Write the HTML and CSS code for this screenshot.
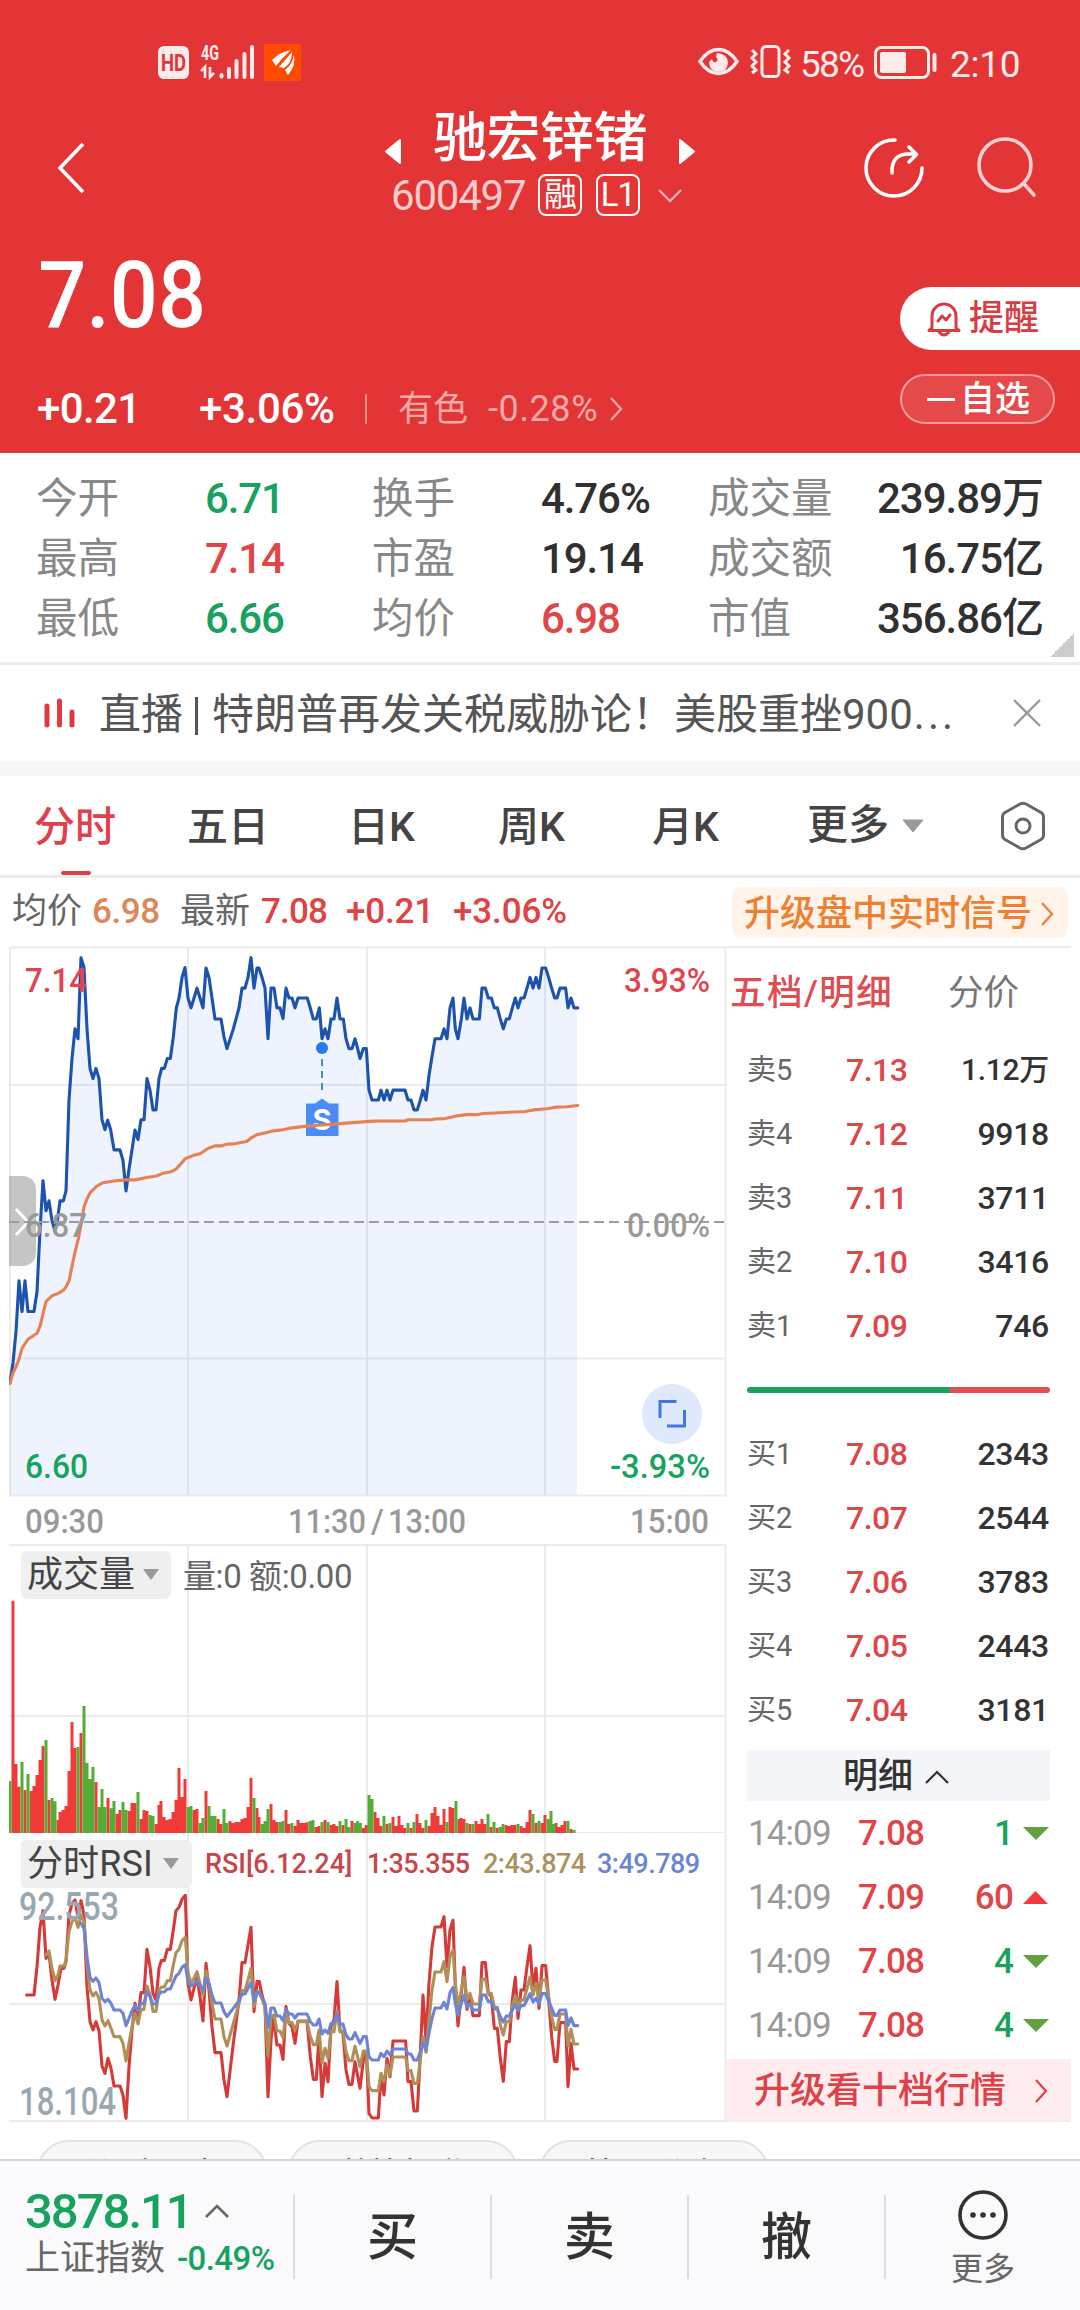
FILE: index.html
```html
<!DOCTYPE html>
<html lang="zh-CN">
<head>
<meta charset="utf-8">
<title>驰宏锌锗 600497</title>
<link rel="stylesheet" href="styles.css">
</head>
<body>
<header class="hero">
  <div class="status">
    <svg class="status-left" width="150" height="44" viewBox="155 40 150 44">
      <rect x="158" y="46" width="31" height="33" rx="6" fill="#fdeaea"/>
      <text x="161" y="71" class="st-hd" textLength="25" lengthAdjust="spacingAndGlyphs">HD</text>
      <text x="201" y="60" class="st-4g" textLength="18" lengthAdjust="spacingAndGlyphs">4G</text>
      <path d="M201 71l4-4v11M210 67v10l4-4" fill="none" stroke="#fdeaea" stroke-width="2.600"/>
      <path d="M221.500 75v1.500M229 69v8M236.500 61v16M244.500 54v23M252 47v30" stroke="#fdeaea" stroke-width="4" stroke-linecap="round"/>
      <rect x="264" y="44" width="37" height="37" fill="#ff4a00"/>
      <path d="M272 60Q280 52 291 50Q283 57 276 66ZM279 67Q286 59 292 52Q292 63 284 68ZM285 70Q292 65 294 55Q296 66 288 75Z" fill="#fff"/>
    </svg>
    <div class="status-right">
      <svg width="96" height="36" viewBox="696 44 96 36" fill="none" stroke="#fdeaea">
        <path d="M700 61.500Q708 49.500 718.500 49.500T737 61.500Q729 73.500 718.500 73.500T700 61.500Z" stroke-width="3.500"/>
        <path d="M717 53Q728 54 728 63Q727 72 718 72Q709 71 709 62L712 59Q713 63 716 62Q719 60 716 57Z" fill="#fdeaea" stroke="none"/>
        <rect x="762" y="46.500" width="17" height="30" rx="4" stroke-width="3"/>
        <path d="M752 50l4 4-4 4 4 4-4 4 4 4-4 3M789 50l-4 4 4 4-4 4 4 4-4 4 4 3" stroke-width="3"/>
      </svg>
      <span class="battery-text">58%</span>
      <svg width="64" height="36" viewBox="873 44 64 36">
        <rect x="875.500" y="47.500" width="53" height="30" rx="6" fill="none" stroke="#fdeaea" stroke-width="3"/>
        <rect x="880" y="52" width="26" height="21" rx="2" fill="#fdeaea"/>
        <path d="M934.500 55v15" stroke="#fdeaea" stroke-width="4" stroke-linecap="round"/>
      </svg>
      <span class="clock">2:10</span>
    </div>
  </div>

  <div class="nav">
    <svg class="back" width="30" height="52" viewBox="0 0 30 52" fill="none" stroke="#fff" stroke-width="3.600"><path d="M25 2L2 26l23 24"/></svg>
    <div class="title">
      <div class="title-row">
        <svg width="18" height="27" viewBox="0 0 18 27"><path d="M16 2V25L2 13.500Z" fill="#fff" stroke="#fff" stroke-width="2" stroke-linejoin="round"/></svg>
        <h1>驰宏锌锗</h1>
        <svg width="18" height="27" viewBox="0 0 18 27"><path d="M2 2V25L16 13.500Z" fill="#fff" stroke="#fff" stroke-width="2" stroke-linejoin="round"/></svg>
      </div>
      <div class="code-row">
        <span class="code">600497</span>
        <span class="badge">融</span>
        <span class="badge">L1</span>
        <svg width="24" height="14" viewBox="0 0 24 14" fill="none" stroke="#f4aeae" stroke-width="2.400"><path d="M1 1l11 11L23 1"/></svg>
      </div>
    </div>
    <svg class="share" width="60" height="60" viewBox="0 0 60 60" fill="none" stroke="#fff" stroke-width="3.600" stroke-linecap="round" stroke-linejoin="round">
      <path d="M31 2A28 28 0 1 0 58 30"/><path d="M28 35Q27 16 45 16H52M45 9l7.500 7.500-7.500 7.500"/>
    </svg>
    <svg class="search" width="62" height="62" viewBox="0 0 62 62" fill="none" stroke="#fbd0d0" stroke-width="3.600" stroke-linecap="round">
      <circle cx="29" cy="28" r="26"/><path d="M49 48l9 10"/>
    </svg>
  </div>

  <div class="quote">
    <div>
      <div class="price">7.08</div>
      <div class="change">
        <span class="chg">+0.21</span><span class="pct">+3.06%</span><i></i>
        <span class="sector">有色</span><span class="sector-pct">-0.28%</span>
        <svg width="14" height="26" viewBox="0 0 14 26" fill="none" stroke="#f4a6a6" stroke-width="2.400"><path d="M2 2l10 11L2 24"/></svg>
      </div>
    </div>
    <div class="actions">
      <button class="remind">
        <svg width="34" height="36" viewBox="0 0 34 36" fill="none" stroke="#d93c40" stroke-width="3" stroke-linejoin="round" stroke-linecap="round">
          <path d="M5 27V15A12 12 0 0 1 29 15V27L32 29.500H2Z"/><path d="M12 31Q17 37 22 31M11 20l4-5 4 4 4-5"/>
        </svg>提醒</button>
      <button class="watch"><i></i>自选</button>
    </div>
  </div>
</header>

<section class="stats">
  <span>今开</span><b class="down">6.71</b><span>换手</span><b>4.76%</b><span>成交量</span><b class="end">239.89万</b>
  <span>最高</span><b class="up">7.14</b><span>市盈</span><b>19.14</b><span>成交额</span><b class="end">16.75亿</b>
  <span>最低</span><b class="down">6.66</b><span>均价</span><b class="up">6.98</b><span>市值</span><b class="end">356.86亿</b>
</section>

<section class="news">
  <svg width="32" height="30" viewBox="0 0 32 30" stroke="#e03a40" stroke-width="5" stroke-linecap="round"><path d="M3 8v19M15.500 3v24M28 14v13"/></svg>
  <p>直播<i></i>特朗普再发关税威胁论！美股重挫900<span>...</span></p>
  <svg width="28" height="28" viewBox="0 0 28 28" stroke="#999" stroke-width="2.400"><path d="M1 1l26 26M27 1L1 27"/></svg>
</section>

<nav class="tabs">
  <a class="on">分时</a><a>五日</a><a>日K</a><a>周K</a><a>月K</a>
  <a class="more">更多<svg width="22" height="14" viewBox="0 0 22 14"><path d="M1 1H21L11 13Z" fill="#999" stroke="#999" stroke-linejoin="round"/></svg></a>
  <svg width="46" height="50" viewBox="0 0 46 50" fill="none" stroke="#666" stroke-width="3" stroke-linejoin="round"><path d="M20 3Q23 1.500 26 3L41 11.500Q43.500 13 43.500 16V34Q43.500 37 41 38.500L26 47Q23 48.500 20 47L5 38.500Q2.500 37 2.500 34V16Q2.500 13 5 11.500Z"/><circle cx="23" cy="25" r="7"/></svg>
</nav>

<section class="info">
  <span class="k">均价</span><span class="avg">6.98</span>
  <span class="k">最新</span><span class="v1">7.08</span><span class="v2">+0.21</span><span class="v3">+3.06%</span>
  <a class="signal">升级盘中实时信号<svg width="14" height="26" viewBox="0 0 14 26" fill="none" stroke="#f08040" stroke-width="2.400"><path d="M2 2l10 11L2 24"/></svg></a>
</section>

<main class="board">
  <div class="charts">
    <svg class="panel" width="718" height="598" viewBox="9 946 718 598">
      <g class="grid"><path d="M9 947.500H727M9 1085H726M9 1358.500H726M9 1495.500H727M10 947V1496M188 947V1496M367 947V1496M545 947V1496M725.500 947V1496"/></g>
      <g transform="translate(0 930) scale(.333333 .395400)">
        <path class="area" d="M30 1428L30,1145 39,1095 48,1015 57,887 66,965 75,887 84,965 102,965 111,915 120,760 129,634 138,710 147,685 156,735 165,762 172,735 180,685 190,685 198,660 207,430 216,325 225,250 234,275 243,70 252,95 261,250 270,350 279,376 288,350 297,376 306,480 315,505 323,481 332,505 342,556 360,556 369,583 378,660 387,605 396,556 405,506 414,530 423,480 432,480 441,376 450,405 459,455 468,455 477,376 485,350 493,350 502,325 511,325 520,270 529,197 537,172 546,120 555,95 564,172 573,197 582,172 591,147 600,172 609,197 618,96 627,120 636,172 645,225 663,225 672,270 681,300 700,250 717,197 726,147 735,147 744,120 753,70 762,147 771,96 777,96 786,120 795,147 804,275 813,147 822,147 831,197 840,197 849,224 858,147 867,172 876,172 885,197 894,172 922,172 931,198 940,225 949,225 958,197 966,275 975,250 984,275 993,225 1002,225 1011,172 1020,225 1030,225 1038,275 1047,300 1056,300 1065,275 1073,300 1080,325 1090,300 1099,300 1107,405 1116,430 1135,430 1143,405 1152,430 1161,405 1170,430 1179,405 1215,405 1224,430 1233,430 1242,455 1252,455 1261,430 1269,405 1278,430 1287,368 1296,320 1305,275 1323,275 1332,250 1341,275 1350,197 1359,172 1366,250 1374,275 1384,225 1392,172 1401,225 1410,197 1419,225 1438,225 1446,147 1456,147 1465,172 1474,172 1483,197 1492,197 1501,225 1510,250 1519,225 1528,225 1537,197 1546,172 1554,197 1563,172 1572,172 1581,147 1590,120 1599,147 1608,120 1617,147 1626,96 1637,96 1646,120 1655,147 1664,172 1671,172 1680,147 1697,147 1704,197 1713,172 1722,197 1731,197V1428Z"/>
        <polyline class="line price-line" points="30,1145 39,1095 48,1015 57,887 66,965 75,887 84,965 102,965 111,915 120,760 129,634 138,710 147,685 156,735 165,762 172,735 180,685 190,685 198,660 207,430 216,325 225,250 234,275 243,70 252,95 261,250 270,350 279,376 288,350 297,376 306,480 315,505 323,481 332,505 342,556 360,556 369,583 378,660 387,605 396,556 405,506 414,530 423,480 432,480 441,376 450,405 459,455 468,455 477,376 485,350 493,350 502,325 511,325 520,270 529,197 537,172 546,120 555,95 564,172 573,197 582,172 591,147 600,172 609,197 618,96 627,120 636,172 645,225 663,225 672,270 681,300 700,250 717,197 726,147 735,147 744,120 753,70 762,147 771,96 777,96 786,120 795,147 804,275 813,147 822,147 831,197 840,197 849,224 858,147 867,172 876,172 885,197 894,172 922,172 931,198 940,225 949,225 958,197 966,275 975,250 984,275 993,225 1002,225 1011,172 1020,225 1030,225 1038,275 1047,300 1056,300 1065,275 1073,300 1080,325 1090,300 1099,300 1107,405 1116,430 1135,430 1143,405 1152,430 1161,405 1170,430 1179,405 1215,405 1224,430 1233,430 1242,455 1252,455 1261,430 1269,405 1278,430 1287,368 1296,320 1305,275 1323,275 1332,250 1341,275 1350,197 1359,172 1366,250 1374,275 1384,225 1392,172 1401,225 1410,197 1419,225 1438,225 1446,147 1456,147 1465,172 1474,172 1483,197 1492,197 1501,225 1510,250 1519,225 1528,225 1537,197 1546,172 1554,197 1563,172 1572,172 1581,147 1590,120 1599,147 1608,120 1617,147 1626,96 1637,96 1646,120 1655,147 1664,172 1671,172 1680,147 1697,147 1704,197 1713,172 1722,197 1733,197"/>
      </g>
      <circle cx="322" cy="1048" r="6" fill="#2878f0"/>
      <path d="M322 1059v35" stroke="#4c88c8" stroke-width="2" stroke-dasharray="7 5"/>
      <path d="M306 1103.500H315L322 1098.500L329 1103.500H338.500V1136H306Z" fill="#4c8cf8"/>
      <text x="322" y="1130" class="mark" text-anchor="middle">S</text>
      <polyline class="line avg-line" transform="translate(0 930) scale(.333333 .395400)" points="30,1147 39,1120 48,1105 57,1085 66,1058 84,1035 111,1020 121,1000 129,970 138,940 156,925 175,919 190,911 198,903 208,885 216,850 225,815 234,785 243,745 252,700 261,680 270,665 290,648 306,640 340,635 378,632 405,632 440,626 470,622 490,615 510,612 520,609 530,603 540,594 555,579 580,570 600,566 625,552 645,546 663,546 680,542 700,541 740,535 755,525 770,518 800,512 820,508 850,505 870,501 920,496 966,493 1030,489 1110,484 1135,483 1215,483 1225,480 1295,480 1305,478 1335,477 1350,474 1370,470 1400,467 1430,467 1450,464 1500,462 1575,459 1600,455 1640,452 1670,448 1700,447 1733,444"/>
      <path d="M9 1176H24Q36 1178 36 1190V1252Q36 1264 24 1266H9Z" fill="#8c8c8c" fill-opacity=".5"/>
      <path d="M16 1209L28 1222L16 1235" fill="none" stroke="#fff" stroke-width="3"/>
      <path d="M9 1222H724" stroke="#999ca6" stroke-width="2" stroke-dasharray="10 5"/>
      <g class="axis">
        <text class="t-up" x="25" y="992" textLength="62" lengthAdjust="spacingAndGlyphs">7.14</text>
        <text x="25" y="1237" textLength="62" lengthAdjust="spacingAndGlyphs">6.87</text>
        <text class="t-down" x="25" y="1478" textLength="63" lengthAdjust="spacingAndGlyphs">6.60</text>
        <text class="t-up" x="624" y="992" textLength="86" lengthAdjust="spacingAndGlyphs">3.93%</text>
        <text x="627" y="1237" textLength="83" lengthAdjust="spacingAndGlyphs">0.00%</text>
        <text class="t-down" x="610" y="1478" textLength="100" lengthAdjust="spacingAndGlyphs">-3.93%</text>
        <text x="25" y="1533" textLength="79" lengthAdjust="spacingAndGlyphs">09:30</text>
        <text x="288" y="1533" textLength="78" lengthAdjust="spacingAndGlyphs">11:30</text>
        <text x="371" y="1533">/</text>
        <text x="388" y="1533" textLength="78" lengthAdjust="spacingAndGlyphs">13:00</text>
        <text x="630" y="1533" textLength="79" lengthAdjust="spacingAndGlyphs">15:00</text>
      </g>
      <circle cx="672" cy="1414" r="30" fill="#dfe8fd"/>
      <path d="M660 1418V1401.500H676.500M684.500 1410V1426H667" fill="none" stroke="#3f78e0" stroke-width="3"/>
    </svg>

    <div class="sub">
      <svg class="panel" width="718" height="289" viewBox="9 1544 718 289">
        <g class="grid"><path d="M9 1545H726M9 1716H726M9 1833H726M188 1545V1833M367 1545V1833M545 1545V1833M725.500 1545V1833"/></g>
        <g transform="translate(0 1530) scale(.333333)" stroke-width="9">
          <path stroke="#f13b38" d="M39 912V212M48 912V702M57 912V770M75 912V780M93 912V783M102 912V768M111 912V735M120 912V690M129 912V648M147 912V810M174 912V870M180 912V846M189 912V840M198 912V828M207 912V723M216 912V576M225 912V654M243 912V609M288 912V756M324 912V804M351 912V852M360 912V840M387 912V843M396 912V819M405 912V819M423 912V867M432 912V840M441 912V843M468 912V882M477 912V825M483 912V813M492 912V861M501 912V870M510 912V867M519 912V846M528 912V810M537 912V714M546 912V801M555 912V747M582 912V840M591 912V837M618 912V783M654 912V867M663 912V882M690 912V873M699 912V879M708 912V876M717 912V876M726 912V867M735 912V864M744 912V831M753 912V744M771 912V834M777 912V861M813 912V822M822 912V870M831 912V876M858 912V840M867 912V882M885 912V888M894 912V870M903 912V879M912 912V879M921 912V877M948 912V891M957 912V888M975 912V870M993 912V885M1002 912V882M1011 912V888M1029 912V885M1056 912V873M1090 912V894M1099 912V885M1125 912V846M1134 912V864M1143 912V888M1161 912V882M1179 912V861M1188 912V888M1197 912V858M1206 912V885M1215 912V894M1233 912V894M1251 912V852M1260 912V879M1269 912V894M1287 912V888M1296 912V849M1305 912V831M1314 912V858M1323 912V885M1332 912V837M1350 912V831M1359 912V834M1377 912V867M1383 912V864M1392 912V867M1410 912V882M1428 912V873M1437 912V882M1446 912V867M1455 912V882M1473 912V891M1491 912V894M1518 912V885M1527 912V888M1536 912V885M1545 912V885M1563 912V888M1572 912V894M1581 912V876M1590 912V840M1608 912V879M1626 912V879M1635 912V855M1668 912V879M1677 912V891M1686 912V885M1695 912V873M1713 912V897"/>
          <path stroke="#55ad35" d="M30 912V753M66 912V696M84 912V732M138 912V630M156 912V804M165 912V814M234 912V651M252 912V528M261 912V699M270 912V747M279 912V711M297 912V831M306 912V777M315 912V831M333 912V835M342 912V813M369 912V816M378 912V840M414 912V786M450 912V855M459 912V858M564 912V831M573 912V828M600 912V879M609 912V864M627 912V828M636 912V858M645 912V858M672 912V837M681 912V879M762 912V804M786 912V882M795 912V873M804 912V837M840 912V876M849 912V873M876 912V879M930 912V873M939 912V870M966 912V876M984 912V876M1020 912V873M1038 912V867M1047 912V891M1065 912V879M1073 912V873M1081 912V879M1107 912V795M1116 912V807M1152 912V858M1170 912V879M1224 912V879M1242 912V876M1278 912V870M1341 912V876M1368 912V813M1401 912V879M1419 912V882M1464 912V852M1482 912V876M1500 912V891M1509 912V882M1554 912V882M1599 912V852M1617 912V873M1644 912V867M1653 912V843M1662 912V882M1704 912V873M1722 912V900"/>
        </g>
      </svg>
      <div class="overlay">
        <button class="pick">成交量<svg width="16" height="12" viewBox="0 0 16 12"><path d="M0 0H16L8 11Z" fill="#999"/></svg></button>
        <span class="vol">量:0 额:0.00</span>
      </div>
    </div>

    <div class="sub">
      <svg class="panel" width="718" height="289" viewBox="9 1833 718 289">
        <g class="grid"><path d="M9 2004H726M9 2121H727M188 1833V2121M367 1833V2121M545 1833V2121M725.500 1833V2121"/></g>
        <g transform="translate(0 1840) scale(.333333)">
          <polyline class="line" stroke="#d63a38" points="80,465 102,465 111,380 120,262 129,212 138,355 147,340 156,420 165,478 174,435 183,385 192,385 198,365 207,225 216,190 225,180 234,232 243,182 252,225 261,440 270,545 279,570 288,545 297,572 306,678 315,700 324,655 333,685 342,738 360,738 369,765 378,835 387,680 396,570 405,490 414,530 423,458 432,458 441,328 450,380 459,460 468,480 477,385 484,362 493,362 502,328 511,328 520,270 528,212 537,202 546,178 556,166 564,430 573,480 582,445 591,410 600,470 609,543 618,370 627,450 636,560 645,638 663,638 672,720 681,770 700,610 717,480 726,368 735,368 744,315 753,262 762,515 771,425 778,425 786,465 795,500 804,770 813,600 820,530 831,615 840,615 849,658 858,500 867,550 876,560 885,610 894,543 921,543 931,650 940,718 949,718 957,590 966,770 975,670 984,725 993,560 1002,540 1011,425 1020,570 1029,580 1038,690 1047,733 1056,733 1065,665 1080,745 1090,660 1099,635 1107,820 1116,834 1135,834 1143,705 1152,765 1161,655 1170,710 1179,603 1217,603 1224,725 1233,725 1242,813 1252,813 1261,640 1269,465 1278,600 1287,430 1296,320 1305,261 1323,261 1332,230 1341,380 1350,270 1359,241 1366,440 1374,558 1384,460 1392,382 1401,508 1410,470 1419,527 1438,527 1446,368 1456,368 1465,460 1474,470 1483,565 1492,565 1501,655 1510,724 1519,605 1528,605 1537,480 1546,412 1554,535 1563,450 1572,450 1581,380 1590,317 1599,450 1608,385 1617,505 1626,377 1637,377 1646,480 1655,590 1664,664 1671,664 1680,548 1697,548 1704,740 1713,610 1722,687 1733,687"/>
          <polyline class="line" stroke="#b09058" points="138,345 147,333 156,385 165,422 174,405 180,378 192,378 198,362 207,275 216,245 225,232 234,262 243,225 252,245 261,370 270,450 279,468 288,457 297,475 306,540 315,558 324,542 333,565 342,590 360,590 369,610 378,663 387,610 396,560 405,520 414,552 423,508 432,508 441,438 450,465 459,514 468,514 477,450 484,441 493,441 502,422 511,422 520,375 528,338 537,328 546,302 556,292 564,400 573,428 582,415 591,395 600,430 609,465 618,393 627,430 636,490 645,537 663,537 672,590 681,618 700,550 717,490 726,452 735,452 744,420 753,385 762,500 771,455 778,455 795,500 804,648 813,530 822,525 831,573 840,573 849,593 858,515 867,548 876,548 885,570 894,545 921,545 931,590 940,614 949,614 957,570 966,668 975,625 984,655 993,575 1002,575 1011,512 1020,575 1029,575 1038,635 1047,662 1056,662 1065,618 1080,680 1090,633 1099,633 1107,740 1116,752 1135,752 1143,700 1152,725 1161,675 1170,705 1179,651 1217,651 1224,692 1233,692 1242,730 1252,730 1261,660 1269,590 1278,637 1287,540 1296,450 1305,396 1323,396 1332,365 1341,425 1350,350 1359,330 1366,430 1374,500 1384,450 1392,410 1401,480 1410,460 1419,492 1438,492 1446,417 1456,417 1465,460 1474,460 1483,502 1492,502 1501,555 1510,585 1519,545 1528,545 1537,500 1546,467 1554,500 1563,480 1572,480 1581,445 1590,411 1599,465 1608,430 1617,475 1626,420 1637,420 1646,470 1655,530 1664,568 1671,568 1680,522 1697,522 1704,618 1713,568 1722,612 1733,612"/>
          <polyline class="line" stroke="#6c84d2" points="243,250 252,265 261,350 270,412 279,424 288,414 297,428 306,475 315,485 324,478 333,490 342,510 360,510 369,520 378,557 387,535 396,512 405,496 414,512 423,490 432,490 441,455 450,470 459,492 468,492 477,462 484,456 493,456 502,447 511,447 528,408 537,400 546,382 556,374 564,425 573,438 582,432 591,422 600,438 609,452 618,414 627,432 636,465 645,489 663,489 672,515 681,530 700,505 717,482 726,462 735,462 744,445 753,428 762,482 771,458 778,458 795,490 804,562 813,504 822,504 831,528 840,528 849,542 858,508 867,522 876,522 885,534 894,522 921,522 931,545 940,555 949,555 957,537 966,582 975,570 984,580 993,550 1002,550 1011,521 1020,552 1029,552 1038,585 1047,597 1056,597 1065,578 1080,610 1090,590 1099,590 1107,650 1116,660 1135,660 1143,640 1152,650 1161,633 1170,645 1179,627 1217,627 1224,642 1233,642 1242,660 1252,660 1261,635 1269,608 1278,630 1287,580 1296,535 1305,504 1323,504 1332,487 1341,507 1350,458 1359,443 1366,490 1374,526 1384,490 1392,467 1401,502 1410,492 1419,510 1438,510 1446,465 1456,465 1465,485 1474,485 1483,507 1492,507 1501,530 1510,546 1519,528 1528,528 1546,493 1554,512 1563,497 1572,497 1581,480 1590,461 1599,486 1608,475 1617,492 1626,461 1637,461 1655,505 1664,526 1671,526 1680,510 1697,510 1704,556 1713,534 1722,557 1733,557"/>
        </g>
        <text class="range" x="19" y="1920" textLength="100" lengthAdjust="spacingAndGlyphs">92.553</text>
        <text class="range" x="19" y="2115" textLength="97" lengthAdjust="spacingAndGlyphs">18.104</text>
      </svg>
      <div class="overlay">
        <button class="pick rsi">分时RSI<svg width="16" height="12" viewBox="0 0 16 12"><path d="M0 0H16L8 11Z" fill="#999"/></svg></button>
        <span class="legend l0">RSI[6.12.24]</span><span class="legend l1">1:35.355</span><span class="legend l2">2:43.874</span><span class="legend l3">3:49.789</span>
      </div>
    </div>
  </div>

  <aside class="book">
    <div class="book-tabs"><span class="on">五档/明细</span><span>分价</span></div>
    <div class="lvl"><span>卖5</span><b>7.13</b><em class="wan">1.12万</em></div>
    <div class="lvl"><span>卖4</span><b>7.12</b><em>9918</em></div>
    <div class="lvl"><span>卖3</span><b>7.11</b><em>3711</em></div>
    <div class="lvl"><span>卖2</span><b>7.10</b><em>3416</em></div>
    <div class="lvl"><span>卖1</span><b>7.09</b><em>746</em></div>
    <div class="ratio"><i></i><i></i></div>
    <div class="lvl"><span>买1</span><b>7.08</b><em>2343</em></div>
    <div class="lvl"><span>买2</span><b>7.07</b><em>2544</em></div>
    <div class="lvl"><span>买3</span><b>7.06</b><em>3783</em></div>
    <div class="lvl"><span>买4</span><b>7.05</b><em>2443</em></div>
    <div class="lvl"><span>买5</span><b>7.04</b><em>3181</em></div>
    <div class="detail">明细<svg width="24" height="14" viewBox="0 0 24 14" fill="none" stroke="#333" stroke-width="2.200"><path d="M1 13L12 2l11 11"/></svg></div>
    <div class="tick"><span>14:09</span><b>7.08</b><em class="down">1</em><svg width="26" height="13" viewBox="0 0 26 13"><path d="M0 0H26L13 13Z" fill="#64a03c"/></svg></div>
    <div class="tick"><span>14:09</span><b>7.09</b><em class="up">60</em><svg width="26" height="13" viewBox="0 0 26 13"><path d="M0 13H25L12.500 0Z" fill="#f83838"/></svg></div>
    <div class="tick"><span>14:09</span><b>7.08</b><em class="down">4</em><svg width="26" height="13" viewBox="0 0 26 13"><path d="M0 0H26L13 13Z" fill="#64a03c"/></svg></div>
    <div class="tick"><span>14:09</span><b>7.08</b><em class="down">4</em><svg width="26" height="13" viewBox="0 0 26 13"><path d="M0 0H26L13 13Z" fill="#64a03c"/></svg></div>
    <a class="upgrade">升级看十档行情<svg width="14" height="26" viewBox="0 0 14 26" fill="none" stroke="#e04048" stroke-width="2.200"><path d="M2 2l10 11L2 24"/></svg></a>
  </aside>
</main>

<div class="chips"><span>分时周内</span><span>逆势操作</span><span>筹码分布</span></div>

<footer class="bar">
  <div class="index">
    <div class="idx-top"><b>3878.11</b><svg width="24" height="14" viewBox="0 0 24 14" fill="none" stroke="#666" stroke-width="2.600"><path d="M1 13L12 2l11 11"/></svg></div>
    <div class="idx-sub"><span>上证指数</span><b>-0.49%</b></div>
  </div>
  <a>买</a><a>卖</a><a>撤</a>
  <div class="etc">
    <svg width="52" height="52" viewBox="0 0 52 52"><circle cx="26" cy="26" r="23" fill="none" stroke="#333" stroke-width="3.600"/><g fill="#333"><circle cx="16" cy="26" r="2.800"/><circle cx="26" cy="26" r="2.800"/><circle cx="36" cy="26" r="2.800"/></g></svg>
    <span>更多</span>
  </div>
</footer>
</body>
</html>
```
FILE: styles.css
```css
* { box-sizing: border-box; margin: 0; padding: 0; }
html, body { width: 1080px; height: 2310px; overflow: hidden; }
body {
  font-family: Roboto, "Noto Sans CJK SC", sans-serif;
  background: #fff; color: #333;
  display: flex; flex-direction: column;
  line-height: 1;
}
b, em, i { font-style: normal; font-weight: 500; }
button { border: 0; background: none; font: inherit; color: inherit; }
svg { display: block; flex: none; }
span, a, b { white-space: nowrap; }
.up { color: #e14545 !important; }
.down { color: #17a35e !important; }

/* header */
.hero { height: 453px; flex: none; background: #e33536; color: #fff; display: flex; flex-direction: column; }
.status { height: 100px; padding: 40px 61px 0 155px; display: flex; justify-content: space-between; }
.st-hd { font-size: 24px; font-weight: 700; fill: #e33536; }
.st-4g { font-size: 20px; font-weight: 700; fill: #fdeaea; }
.status-right { display: flex; align-items: center; height: 44px; color: #fdeaea; font-size: 37px; }
.battery-text { margin: 5px 7px 0 8px; width: 66px; letter-spacing: -1.8px; }
.clock { margin: 5px 0 0 13px; width: 69px; letter-spacing: -.3px; }

.nav { height: 140px; display: grid; grid-template-columns: 27px 779px 112px 60px; align-items: start; padding: 0 44px 0 58px; }
.back { margin-top: 42px; }
.title { margin-left: 299px; width: 312px; }
.title-row { display: flex; height: 70px; justify-content: space-between; }
.title-row svg { margin-top: 38px; }
.title h1 { font-size: 54px; font-weight: 500; line-height: 78px; letter-spacing: -.5px; }
.code-row { display: flex; align-items: center; height: 50px; padding-left: 7px; }
.code { font-size: 42px; letter-spacing: -1.2px; width: 147px; color: #f8cccc; padding-top: 2px; }
.badge { width: 44px; height: 42px; border: 2.500px solid #fff; border-radius: 8px; font-size: 33px; line-height: 37px; text-align: center; margin-right: 14px; letter-spacing: -1px; }
.code-row svg { margin-left: 4px; margin-top: 2px; }
.share { margin-top: 38px; }
.search { margin-top: 37px; }

.quote { flex: 1; display: flex; justify-content: space-between; }
.price { font-size: 93px; font-weight: 500; line-height: 111px; height: 109px; padding-left: 42px; transform: scaleX(.91); transform-origin: 0 0; }
.change { display: flex; align-items: center; height: 50px; margin-top: 34px; padding: 2px 0 0 37px; font-size: 42px; font-weight: 500; }
.chg { width: 162px; letter-spacing: -.6px; }
.pct { width: 166px; letter-spacing: -.3px; }
.change i { width: 2px; height: 30px; background: #f08c8c; margin-right: 31px; }
.sector { width: 90px; font-size: 35px; font-weight: 400; color: #f6a9a9; }
.sector-pct { width: 121px; font-size: 36px; font-weight: 400; color: #f6a9a9; letter-spacing: .6px; }
.actions { width: 180px; padding-top: 47px; }
.remind { width: 180px; height: 63px; background: #fff; color: #d93c40; border-radius: 32px 0 0 32px; display: flex; align-items: center; gap: 8px; padding-left: 27px; font-size: 35px; font-weight: 500; }
.watch { width: 155px; height: 50px; margin-top: 24px; border: 2px solid #f19a9a; border-radius: 25px; background: rgba(255,255,255,.1); color: #fff; display: flex; align-items: center; font-size: 35px; font-weight: 500; padding-left: 25px; }
.watch i { width: 28px; height: 3px; background: #fff; margin-right: 5px; }

/* key figures */
.stats {
  height: 212px; flex: none; border-bottom: 3px solid #ececec; padding: 16px 37px 0 36px;
  display: grid; grid-template-columns: 168px 168px 168px 168px 130px 1fr; grid-auto-rows: 60px; align-items: center;
  font-size: 41.5px;
  background: linear-gradient(135deg, transparent 50%, #ccc 50%) 1050px 180px / 24px 24px no-repeat;
}
.stats span { color: #888; }
.stats b { font-weight: 500; font-size: 42px; letter-spacing: -1.1px; color: #303030; padding-left: 1px; }
.stats .end { text-align: right; letter-spacing: -1px; padding: 0; }

.news { height: 96px; flex: none; display: flex; align-items: center; padding-left: 44px; }
.news p { width: 937px; padding: 3px 0 0 23px; font-size: 42px; line-height: 60px; color: #555; white-space: nowrap; }
.news p i { display: inline-block; width: 3px; height: 38px; background: #555; margin: 0 14px 0 12px; vertical-align: -6px; }
.news p span { letter-spacing: 3px; margin-left: 1px; }

.tabs { height: 117px; flex: none; border-top: 15px solid #f7f7f7; border-bottom: 3px solid #ebebeb; display: grid; grid-template-columns: 153px 161px 150px 154px 155px 193px 46px; align-items: center; padding-left: 34px; font-size: 41px; font-weight: 500; color: #444; }
.tabs a { height: 99px; line-height: 103px; position: relative; }
.tabs .on { color: #e0404a; }
.tabs .on::after { content: ""; position: absolute; left: 27px; bottom: 0; width: 30px; height: 4px; border-radius: 2px; background: #d8404c; }
.tabs .more { display: flex; align-items: center; gap: 13px; }

.info { height: 68px; flex: none; display: flex; align-items: center; padding: 0 12px 2px 12px; font-size: 35px; color: #e04343; }
.info span { letter-spacing: -.4px; font-weight: 500; }
.info .k { color: #666; width: 80px; letter-spacing: 0; font-weight: 400; }
.info .avg { color: #dd8656; width: 88px; }
.info .v1 { margin-left: 1px; width: 85px; letter-spacing: -.8px; }
.info .v2 { width: 107px; letter-spacing: -.2px; }
.info .v3 { letter-spacing: -.1px; }
.signal { margin-left: auto; width: 336px; height: 51px; margin-top: 2px; border-radius: 8px; background: #fff3ea; color: #f08030; display: flex; align-items: center; justify-content: space-between; padding: 3px 14px 0 12px; font-size: 36px; font-weight: 500; }

/* charts */
.board { height: 1176px; flex: none; display: flex; padding-left: 9px; }
.charts { width: 718px; }
.grid { stroke: #ebebec; stroke-width: 2; fill: none; }
.line { fill: none; stroke-width: 3.100px; stroke-linejoin: round; stroke-linecap: round; vector-effect: non-scaling-stroke; }
.price-line { stroke: #1c53ad; }
.avg-line { stroke: #e88055; }
.area { fill: #5b8def; fill-opacity: .1; }
.mark { font: 700 29px Inter, sans-serif; fill: #fff; }
.axis { font-size: 33px; font-weight: 500; fill: #999; }
.t-up { fill: #e0444c; }
.t-down { fill: #17a35e; }
.range { font-size: 38px; fill: #98a8b2; font-weight: 500; }
.sub { position: relative; }
.overlay { position: absolute; left: 12px; top: 7px; display: flex; align-items: center; }
.pick { height: 48px; width: 150px; padding: 0 0 0 6px; border-radius: 6px; background: #efefef; font-size: 36px; display: flex; align-items: center; gap: 8px; white-space: nowrap; color: #444; }
.rsi { width: 171px; gap: 10px; letter-spacing: .1px; }
.vol { font-size: 33px; color: #666; margin-left: 12px; letter-spacing: -.4px; padding-top: 2px; }
.legend { font-size: 27px; font-weight: 500; letter-spacing: -.5px; }
.l0 { color: #c8454a; margin-left: 13px; width: 162px; letter-spacing: 0; }
.l1 { color: #c8454a; width: 116px; }
.l2 { color: #ac9060; width: 114px; }
.l3 { color: #6c84d2; }

/* order book */
.book { width: 344px; border-top: 2px solid #ebebec; border-bottom: 2px solid #ebebec; }
.book-tabs { height: 90px; display: flex; align-items: center; padding: 2px 0 0 3px; font-size: 35.5px; color: #777; }
.book-tabs .on { width: 218px; font-weight: 500; color: #e04c50; letter-spacing: 1.5px; }
.lvl { height: 64px; display: grid; grid-template-columns: 98px 100px 1fr; align-items: center; padding: 0 22px 0 20px; font-size: 32px; }
.lvl span { font-size: 29px; color: #666; }
.lvl b { color: #e0454a; letter-spacing: -.5px; padding-left: 1px; }
.lvl em, .tick em { text-align: right; }
.lvl em { letter-spacing: -.3px; }
.lvl .wan { font-size: 30px; }
.ratio { height: 64px; display: flex; align-items: center; padding: 0 21px 0 20px; }
.ratio i { height: 6px; width: 203px; background: #17a35e; border-radius: 3px 0 0 3px; }
.ratio i + i { width: 100px; background: #e35050; border-radius: 0 3px 3px 0; }
.detail { height: 51px; margin: 8px 21px 0 20px; background: #f4f5f9; display: flex; align-items: center; justify-content: center; gap: 12px; font-size: 35px; font-weight: 500; padding: 2px 5px 0 0; }
.tick { height: 64px; display: grid; grid-template-columns: 110px 80px 75px 26px; align-items: center; padding-left: 21px; font-size: 35px; letter-spacing: -.8px; }
.tick span { color: #999; letter-spacing: -.9px; }
.tick b { color: #e0454a; }
.tick svg { margin-left: 10px; }
.upgrade { height: 62px; margin-top: 2px; background: #feecee; color: #e04048; display: flex; align-items: center; justify-content: space-between; padding: 2px 23px 0 27px; font-size: 36px; font-weight: 500; }

/* chips cut off by the bottom bar */
.chips { height: 37px; flex: none; overflow: hidden; padding: 18px 0 0 37px; display: flex; gap: 21px; }
.chips span { width: 230px; height: 64px; border: 2px solid #e2e2e2; border-radius: 32px; background: #f7f7f7; text-align: center; font-size: 35px; line-height: 69px; color: #555; flex: none; }

.bar { flex: 1; background: #fafafc; border-top: 2px solid #d4d4d8; display: grid; grid-template-columns: 293px 197px 197px 197px 1fr; }
.bar a { font-size: 51px; font-weight: 500; text-align: center; height: 84px; margin-top: 34px; line-height: 85px; border-left: 2px solid #dcdce0; }
.bar .index { padding: 28px 0 0 25px; }
.idx-top { display: flex; height: 44px; align-items: center; }
.idx-top b { font-size: 49px; color: #17a35e; letter-spacing: -2px; width: 180px; }
.idx-sub { display: flex; align-items: center; height: 50px; font-size: 35px; }
.idx-sub span { color: #666; width: 152px; }
.idx-sub b { font-size: 33px; color: #17a35e; letter-spacing: -.6px; }
.etc { height: 84px; margin-top: 34px; border-left: 2px solid #dcdce0; display: flex; flex-direction: column; align-items: center; font-size: 32px; color: #666; }
.etc svg { margin-top: -6px; }
.etc span { margin-top: 12px; }
```
